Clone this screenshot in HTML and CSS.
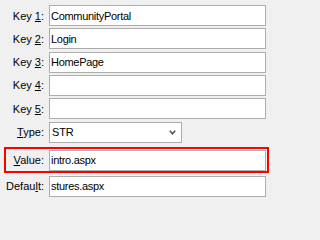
FILE: index.html
```html
<!DOCTYPE html>
<html>
<head>
<meta charset="utf-8">
<link rel="stylesheet" href="styles.css">
</head>
<body>
<div class="form">
  <div class="row"><label class="lbl">Key <u>1</u>:</label><input class="field" type="text" value="CommunityPortal"></div>
  <div class="row"><label class="lbl">Key <u>2</u>:</label><input class="field" type="text" value="Login"></div>
  <div class="row"><label class="lbl">Key <u>3</u>:</label><input class="field" type="text" value="HomePage"></div>
  <div class="row"><label class="lbl">Key <u>4</u>:</label><input class="field" type="text" value=""></div>
  <div class="row"><label class="lbl">Key <u>5</u>:</label><input class="field" type="text" value=""></div>
  <div class="row"><label class="lbl"><u>T</u>ype:</label>
    <div class="select"><span class="sel-text">STR</span>
      <svg class="chev" width="7" height="5" viewBox="0 0 7 5"><polyline points="0.8,0.8 3.5,3.8 6.2,0.8" fill="none" stroke="#5a5a5a" stroke-width="1.7"/></svg>
    </div>
  </div>
  <div class="row row-value"><label class="lbl"><u>V</u>alue:</label><input class="field" type="text" value="intro.aspx"></div>
  <div class="row"><label class="lbl">Defau<u>l</u>t:</label><input class="field" type="text" value="stures.aspx"></div>
  <div class="highlight"></div>
</div>
</body>
</html>
```
FILE: styles.css
```css
html, body {
  margin: 0;
  padding: 0;
  background: #f0f0f0;
}
body {
  width: 271px;
  height: 202px;
  overflow: hidden;
  font-family: "Liberation Sans", Arial, sans-serif;
  font-size: 11px;
  color: #000;
}
.form {
  position: relative;
  display: flex;
  flex-direction: column;
  gap: 2.33px;
  padding: 5px 5px 0 0;
}
.row {
  display: flex;
  align-items: center;
  height: 21px;
}
.row-value {
  margin: 5px 0 2.33px 0;
}
.lbl {
  width: 44px;
  flex: none;
  text-align: right;
  margin-right: 5px;
  white-space: nowrap;
}
.lbl u {
  text-decoration-thickness: 1px;
  text-underline-offset: 1px;
}
.field {
  flex: 1;
  min-width: 0;
  height: 21px;
  box-sizing: border-box;
  margin: 0;
  border: 1px solid #adadad;
  background: #fff;
  padding: 0 1px;
  font-family: "Liberation Sans", Arial, sans-serif;
  font-size: 11px;
  letter-spacing: -0.3px;
  color: #000;
  outline: none;
  border-radius: 0;
}
.select {
  width: 133px;
  height: 21px;
  box-sizing: border-box;
  border: 1px solid #adadad;
  background: #fff;
  display: flex;
  align-items: center;
  justify-content: space-between;
  padding: 0 5px 0 2px;
}
.sel-text {
  letter-spacing: -0.2px;
}
.chev {
  display: block;
  margin-top: 1px;
}
.highlight {
  position: absolute;
  left: 4px;
  top: 147px;
  width: 265px;
  height: 26px;
  box-sizing: border-box;
  border: 2px solid #ff0000;
  pointer-events: none;
}
```
